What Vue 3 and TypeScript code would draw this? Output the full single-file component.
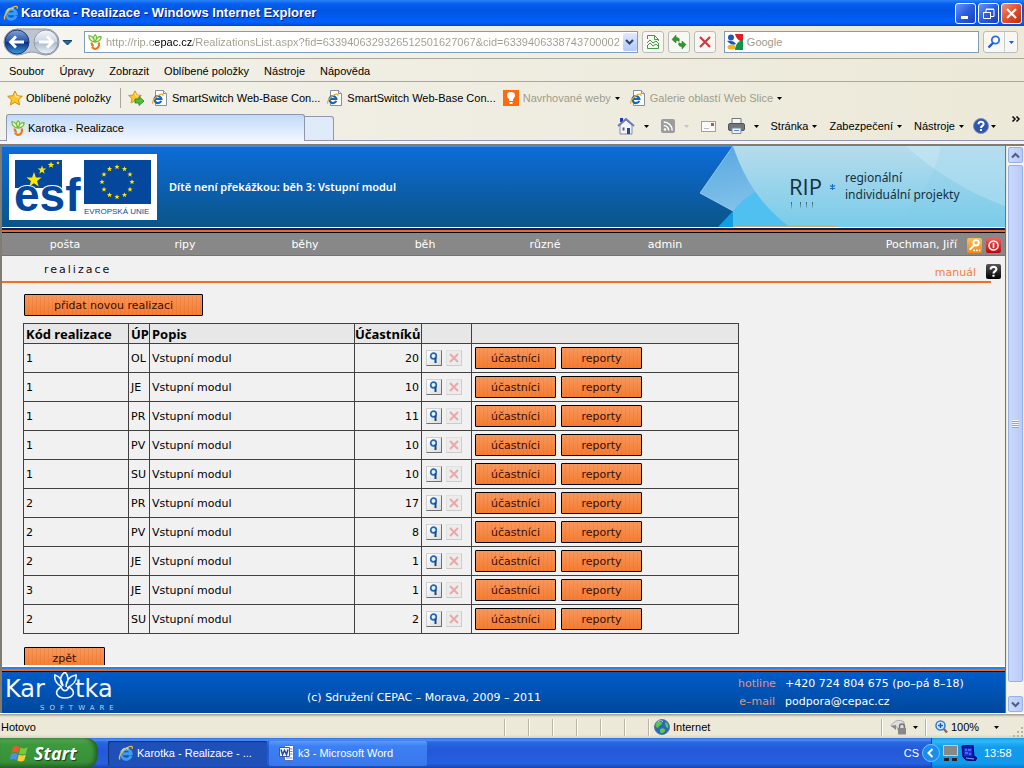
<script setup lang="ts">
import { ref } from 'vue'

interface Realization {
  code: number
  office: string
  description: string
  participants: number
}

const url = ref('http://rip.cepac.cz/RealizationsList.aspx?fid=6339406329326512501627067&cid=6339406338743700002')
const query = ref('')
const menus: string[] = ['Soubor', 'Úpravy', 'Zobrazit', 'Oblíbené položky', 'Nástroje', 'Nápověda']
const sections: string[] = ['pošta', 'ripy', 'běhy', 'běh', 'různé', 'admin']
const commands: string[] = ['Stránka', 'Zabezpečení', 'Nástroje']

const desc = 'Vstupní modul'
const rows: Realization[] = [
  { code: 1, office: 'OL', description: desc, participants: 20 },
  { code: 1, office: 'JE', description: desc, participants: 10 },
  { code: 1, office: 'PR', description: desc, participants: 11 },
  { code: 1, office: 'PV', description: desc, participants: 10 },
  { code: 1, office: 'SU', description: desc, participants: 10 },
  { code: 2, office: 'PR', description: desc, participants: 17 },
  { code: 2, office: 'PV', description: desc, participants: 8 },
  { code: 2, office: 'JE', description: desc, participants: 1 },
  { code: 3, office: 'JE', description: desc, participants: 1 },
  { code: 2, office: 'SU', description: desc, participants: 2 },
]

const starPoints = (cx: number, cy: number, r: number): string =>
  Array.from({ length: 10 }, (_, i) => {
    const a = (i * Math.PI) / 5 - Math.PI / 2
    const d = i % 2 === 0 ? r : r * 0.4
    return `${(cx + d * Math.cos(a)).toFixed(2)},${(cy + d * Math.sin(a)).toFixed(2)}`
  }).join(' ')

const flagStars: string[] = Array.from({ length: 12 }, (_, i) => {
  const a = (i * Math.PI) / 6
  return starPoints(108 + 15 * Math.cos(a), 28 + 15 * Math.sin(a), 2.8)
})
</script>

<template>
  <div class="screen">
    <svg class="defs" width="0" height="0" aria-hidden="true">
      <symbol id="ie" viewBox="0 0 16 16">
        <path d="M13 10.800A5 5 0 1 1 13.200 8.800H5" fill="none" stroke="#3c9cf0" stroke-width="3" />
        <path d="M3.600 6.600A4.800 4.800 0 0 1 10.500 4" fill="none" stroke="#b8e4ff" stroke-width="1.200" />
        <path d="M2.200 14.400C-.2 13 3 6.500 8.500 3c4-2.500 6.600-2 5.600.7" fill="none" stroke="#f4bc28" stroke-width="1.300" />
      </symbol>
      <symbol id="iepage" viewBox="0 0 16 16">
        <path d="M3.500.5h8l3 3v12h-11z" fill="#fff" stroke="#8a8f98" />
        <path d="M11.500.5v3h3" fill="#e4e8ee" stroke="#8a8f98" />
        <path d="M9.200 10.800A3.500 3.500 0 1 1 9.400 9H3.500" fill="none" stroke="#1667c4" stroke-width="2.200" />
        <path d="M1 13.600C-.5 12 3 7 7 5c3-1.500 4.500-1 3.800 1" fill="none" stroke="#f0a81c" stroke-width="1.200" />
      </symbol>
      <symbol id="carrot" viewBox="0 0 14 16">
        <path d="M6.500 8C2 7 .8 4 1 1.600 4 2 6 4 6.500 8zM7 7.500C4.500 4 6 1.500 7.200.7 9 2 9 5 7 7.500zM7.500 8C8 4 10.500 2.500 13 2.600 13.200 5.500 11 7.500 7.500 8z" fill="#f0ffdc" stroke="#74c034" stroke-width="1.300" />
        <path d="M3.800 8.500c-.5 2 .5 3 2 3.500M10.500 8.500c1.500 3-.5 6-3 6.300-1.500.2-3-.8-3.200-2" fill="none" stroke="#f07818" stroke-width="2.200" />
      </symbol>
      <symbol id="star" viewBox="0 0 16 16">
        <path d="M8 1l2.200 4.700 5.100.6-3.800 3.500 1.100 5.100L8 12.300l-4.600 2.600 1.100-5.100L.7 6.300l5.100-.6z" fill="#ffc52c" stroke="#d08c18" />
        <path d="M8 3.500l1.300 3.200 3.200.4" fill="none" stroke="#fff0a0" />
      </symbol>
      <symbol id="down" viewBox="0 0 5 3"><path d="M0 0h5L2.500 3z" fill="currentColor" /></symbol>
    </svg>

    <header class="titlebar">
      <svg width="16" height="16"><use href="#ie" /></svg>
      <h1>Karotka - Realizace - Windows Internet Explorer</h1>
      <div class="winbtns">
        <button aria-label="Minimalizovat"><svg viewBox="0 0 19 19"><path d="M5 13.500h7" stroke="#fff" stroke-width="3" /></svg></button>
        <button aria-label="Obnovit"><svg viewBox="0 0 19 19" fill="none" stroke="#fff"><path d="M7 8V5.500h8v7h-3M7 5h8M4 8.500h7.500v6H4.500V8M4 8.500h8" /></svg></button>
        <button class="close" aria-label="Zavřít"><svg viewBox="0 0 19 19"><path d="M5 5l9 9M14 5l-9 9" stroke="#fff" stroke-width="2.200" /></svg></button>
      </div>
    </header>

    <div class="navrow">
      <svg class="travel" width="72" height="32" viewBox="0 0 72 32">
        <defs>
          <linearGradient id="gb" x2="0" y2="1"><stop stop-color="#86a3d8" /><stop offset=".48" stop-color="#2552a8" /><stop offset=".52" stop-color="#0c2f80" /><stop offset="1" stop-color="#3b9be8" /></linearGradient>
          <linearGradient id="gf" x2="0" y2="1"><stop stop-color="#f4f7fb" /><stop offset=".48" stop-color="#ccd5e2" /><stop offset=".52" stop-color="#aab8cc" /><stop offset="1" stop-color="#edf4fb" /></linearGradient>
        </defs>
        <path d="M17 3h29a13 13 0 0 1 0 26c-6 0-8-3-14-3s-9 3-15 3a13 13 0 0 1 0-26z" fill="#bfc5ce" stroke="#8f98a6" />
        <circle cx="17" cy="16" r="12" fill="url(#gb)" stroke="#1c3870" />
        <circle cx="46" cy="16" r="12" fill="url(#gf)" stroke="#8e9aac" />
        <path d="M24 16H11M16 10.500L10.500 16l5.500 5.500" fill="none" stroke="#fff" stroke-width="2.800" />
        <path d="M39 16h13M47 10.500l5.500 5.500-5.500 5.500" fill="none" stroke="#fff" stroke-width="2.800" />
        <path d="M63 14.500h9l-4.500 4.500z" fill="#1b6cae" stroke="#16406e" />
      </svg>
      <div class="address">
        <svg width="14" height="16"><use href="#carrot" /></svg>
        <input v-model="url" aria-label="Adresa" />
        <button class="drop" aria-label="Historie adres"><svg width="9" height="7" viewBox="0 0 9 7"><path d="M1 1l3.500 3.500L8 1" fill="none" stroke="#31466f" stroke-width="2.200" /></svg></button>
      </div>
      <button class="tool" aria-label="Kompatibilní zobrazení"><svg width="14" height="16" viewBox="0 0 14 16"><path d="M1.500 5V1.500h7l4 4V7M8.500 1.500v4h4M1.500 11v3.500h11V10" fill="none" stroke="#3f9a48" /><path d="M1 9l3-3 3 3 3-2 3 3M1 12l3-3 3 3 3-2 3 3" fill="none" stroke="#3f9a48" /></svg></button>
      <button class="tool" aria-label="Aktualizovat"><svg width="16" height="16" viewBox="0 0 16 16"><path d="M1 5.500L5 1v2.500c3 0 4 1.500 3 4C7.500 6.500 6.500 6.500 5 6.500V9zM15 10.500L11 15v-2.500c-3 0-4-1.500-3-4 .5 1 1.500 1 3 1V7z" fill="#2c9a30" stroke="#1b7220" stroke-width=".5" /></svg></button>
      <button class="tool" aria-label="Zastavit"><svg width="14" height="14" viewBox="0 0 14 14"><path d="M2 2l10 10M12 2L2 12" stroke="#cc3b40" stroke-width="2.200" /></svg></button>
      <div class="search">
        <svg width="16" height="16" viewBox="0 0 16 16"><rect width="16" height="16" rx="1" fill="#fff" /><path d="M8 0h8v7C12 8 9 4 8 0z" fill="#e02020" /><path d="M16 6v10H8c0-5 3-9 8-10z" fill="#129448" /><circle cx="4" cy="3.500" r="3" fill="#2454c0" /><path d="M0 7c3-1 8 0 9 3-3 2-6 0-9-3z" fill="#2454c0" /><ellipse cx="4.500" cy="13" rx="4" ry="2.600" fill="#f2b41c" /></svg>
        <input v-model="query" placeholder="Google" aria-label="Hledat" />
      </div>
      <div class="go">
        <button aria-label="Vyhledat"><svg width="14" height="14" viewBox="0 0 14 14"><circle cx="8.500" cy="5" r="3.700" fill="#fff" stroke="#2f6fe0" stroke-width="1.800" /><path d="M6 8l-4.500 4.500" stroke="#2356c8" stroke-width="2.400" /></svg></button>
        <button class="blue" aria-label="Možnosti hledání"><svg width="5" height="3"><use href="#down" /></svg></button>
      </div>
    </div>

    <nav class="menurow"><button v-for="m in menus" :key="m">{{ m }}</button></nav>

    <nav class="favbar">
      <button class="favs"><svg width="16" height="16"><use href="#star" /></svg>Oblíbené položky</button>
      <button class="addfav" aria-label="Přidat na panel"><svg width="17" height="16" viewBox="0 0 17 16"><use href="#star" width="14" height="14" /><path d="M7 9h4V6.500l5 4.500-5 4.500V13H7z" fill="#4cc03c" stroke="#1f8020" stroke-width=".8" /></svg></button>
      <a href="#"><svg width="16" height="16"><use href="#iepage" /></svg>SmartSwitch Web-Base Con...</a>
      <a href="#"><svg width="16" height="16"><use href="#iepage" /></svg>SmartSwitch Web-Base Con...</a>
      <button class="dim"><svg width="16" height="16" viewBox="0 0 16 16"><path fill="#ff6a0c" d="M0 0h16v16H0z" /><path d="M8 2c5 0 5 5 2 7v2H6V9C3 7 3 2 8 2zM6.500 12h3v2h-3z" fill="#fff" /></svg>Navrhované weby<svg class="dd" width="5" height="3"><use href="#down" /></svg></button>
      <button class="dim"><svg width="16" height="16"><use href="#iepage" /></svg>Galerie oblastí Web Slice<svg class="dd" width="5" height="3"><use href="#down" /></svg></button>
    </nav>

    <div class="tabrow">
      <button class="tab"><svg width="14" height="16"><use href="#carrot" /></svg>Karotka - Realizace</button>
      <button class="newtab" aria-label="Nová karta"></button>
      <div class="cmds">
        <button class="ic" aria-label="Domů"><svg width="18" height="18" viewBox="0 0 18 18"><path d="M3 8v9h12V8L9 3z" fill="#f4f4fa" stroke="#8a8aa0" /><path d="M3 1h3v4H3z" fill="#2838a8" /><path d="M1 9l8-7 8 7" fill="none" stroke="#6a7ab8" stroke-width="1.800" /><path d="M10 11h3v6h-3z" fill="#284890" /><path d="M5.500 10.500h2v3h-2z" fill="#586070" /></svg><svg class="dd" width="5" height="3"><use href="#down" /></svg></button>
        <button class="ic faint" aria-label="Kanály"><svg width="14" height="14" viewBox="0 0 14 14"><rect width="14" height="14" rx="2" fill="#9c9c9c" /><circle cx="4" cy="10.500" r="1.300" fill="#fff" /><path d="M2.700 6.500a5 5 0 0 1 5 5M2.700 3a8.500 8.500 0 0 1 8.500 8.500" fill="none" stroke="#fff" stroke-width="1.500" /></svg><svg class="dd" width="5" height="3"><use href="#down" /></svg></button>
        <button class="ic" aria-label="Pošta"><svg width="15" height="11" viewBox="0 0 15 11"><rect x=".5" y=".5" width="14" height="10" fill="#fbfbfb" stroke="#a0a0a0" /><path d="M10 2h3v3h-3z" fill="#d84848" /><path d="M3 7.500h5" stroke="#bbb" /></svg></button>
        <button class="ic" aria-label="Tisk"><svg width="17" height="16" viewBox="0 0 17 16"><path d="M4 .5h9V6H4z" fill="#f5f5f5" stroke="#777" /><rect x=".5" y="5.500" width="16" height="7" rx="1.500" fill="#72767c" stroke="#50545a" /><path d="M4 10h9v5.500H4z" fill="#eef2fa" stroke="#889" /><path d="M6 12.500h5" stroke="#4a90d8" /></svg><svg class="dd" width="5" height="3"><use href="#down" /></svg></button>
        <button v-for="c in commands" :key="c" class="cmd">{{ c }}<svg class="dd" width="5" height="3"><use href="#down" /></svg></button>
        <button class="ic help" aria-label="Nápověda"><svg width="16" height="16" viewBox="0 0 16 16"><circle cx="8" cy="8" r="7.500" fill="#2c56b0" stroke="#8090b0" /><path d="M5.500 6.200C5.500 3 10.600 3 10.600 6c0 2-2.600 1.800-2.600 4M8 11v2" fill="none" stroke="#fff" stroke-width="2" /></svg><svg class="dd" width="5" height="3"><use href="#down" /></svg></button>
        <button class="more" aria-label="Další příkazy"><svg width="8" height="6" viewBox="0 0 8 6"><path d="M.5.5L3 3 .5 5.500M4.500.5L7 3 4.500 5.500" fill="none" stroke="#000" stroke-width="1.500" /></svg></button>
      </div>
    </div>
    <div class="edge"></div>

    <div class="viewport">
      <div class="page">
        <div class="banner">
          <svg class="logo" width="148" height="66" viewBox="0 0 148 66" role="img" aria-label="ESF, Evropská unie">
            <path fill="#fff" d="M0 0h148v66H0z" />
            <path fill="#05479c" d="M6 6h47v28H6z" />
            <text x="5" y="57" class="esf">esf</text>
            <path fill="#05479c" d="M75 6h67v44H75z" />
            <g fill="#ffe800">
              <polygon :points="starPoints(25, 26, 8)" /><polygon :points="starPoints(33, 16, 4.500)" />
              <polygon :points="starPoints(42, 11, 3.500)" /><polygon :points="starPoints(49, 9, 2)" />
              <polygon v-for="(p, i) in flagStars" :key="i" :points="p" />
            </g>
            <text x="75" y="60" class="eu">EVROPSKÁ UNIE</text>
          </svg>
          <strong>Dítě není překážkou: běh 3: Vstupní modul</strong>
          <svg class="rip" width="305" height="81" viewBox="0 0 305 81">
            <defs>
              <linearGradient id="sky" x2="0" y2="1"><stop stop-color="#b6dcec" /><stop offset="1" stop-color="#78cbea" /></linearGradient>
              <linearGradient id="left" x2=".6" y2="1"><stop stop-color="#58a8e0" /><stop offset="1" stop-color="#98d0f0" /></linearGradient>
              <linearGradient id="fade" x2="0" y2="1"><stop stop-color="#38606e" /><stop offset="1" stop-color="#80c4dc" /></linearGradient>
            </defs>
            <path d="M18 81l15-16 12 16z" fill="#149ce0" />
            <path d="M33 0L0 47l33 18v16h272V0z" fill="url(#left)" />
            <path d="M33 65q10-13 24-20l35 36H33z" fill="#50c0f0" />
            <path d="M33 0c10 30 27 60 57 81h215V0z" fill="url(#sky)" />
            <path d="M206 0h99v60C265 45 235 26 206 0z" fill="#d4eef8" opacity=".4" />
            <path d="M241 0c-5 25-22 60-50 81h114V0z" fill="#80ccea" opacity=".2" />
            <path d="M33 0L0 47l33 18" fill="none" stroke="#b0dcf4" opacity=".7" />
            <path d="M33 80.500h105" stroke="#c4ae78" />
            <text x="89" y="49" class="big">RIP</text>
            <path d="M91 56h1v7h-1zM100 56h1v6h-1zM106 56h1v6h-1zM112 56h1v6h-1z" fill="url(#fade)" />
            <path d="M132.500 38v6M130 39.500l5 3M135 39.500l-5 3" stroke="#1873c0" stroke-width="1.200" />
            <text x="145" y="36" class="sub">regionální</text>
            <text x="145" y="53" class="sub">individuální projekty</text>
          </svg>
        </div>
        <div class="stripes"></div>
        <nav class="sections">
          <a v-for="s in sections" :key="s" href="#">{{ s }}</a>
          <span class="user">Pochman, Jiří</span>
          <button class="sq key" aria-label="Změnit heslo"><svg viewBox="0 0 14 14"><circle cx="8.500" cy="4.500" r="2.500" fill="none" stroke="#fff" stroke-width="1.800" /><path d="M7 6.500L2.500 11" stroke="#fff" stroke-width="1.800" /><path d="M6 11.500h1.500M8.500 11.500H10M11 11.500h1.500" stroke="#fff" stroke-width="1.500" /></svg></button>
          <button class="sq off" aria-label="Odhlásit"><svg viewBox="0 0 14 14"><circle cx="7" cy="7" r="4.200" fill="none" stroke="#fff" stroke-width="1.400" /><path d="M7 4.500v5" stroke="#fff" stroke-width="1.500" /></svg></button>
        </nav>
        <div class="crumbs">
          <h2>realizace</h2>
          <a href="#">manuál</a>
          <button class="sq q" aria-label="Nápověda k aplikaci"><svg viewBox="0 0 14 14"><path d="M4.300 5.200C4.300 1.800 9.700 1.800 9.700 5c0 2-2.700 1.600-2.700 3.800M7 10v2" fill="none" stroke="#fff" stroke-width="2" /></svg></button>
        </div>
        <main>
          <button class="orange wide">přidat novou realizaci</button>
          <table>
            <colgroup><col class="c1" /><col class="c2" /><col class="c3" /><col class="c4" /><col class="c5" /><col class="c6" /></colgroup>
            <thead><tr><th>Kód realizace</th><th>ÚP</th><th>Popis</th><th class="num">Účastníků</th><th></th><th></th></tr></thead>
            <tbody>
              <tr v-for="(r, i) in rows" :key="i">
                <td>{{ r.code }}</td><td>{{ r.office }}</td><td>{{ r.description }}</td><td class="num">{{ r.participants }}</td>
                <td class="tools"><div class="acts">
                  <button class="mini" aria-label="Zobrazit"><svg viewBox="0 0 14 14"><circle cx="6.500" cy="5" r="2.800" fill="#e8f4ff" stroke="#2468b4" stroke-width="1.700" /><path d="M8.500 6.500V12" stroke="#164880" stroke-width="2" /></svg></button>
                  <button class="mini dis" disabled aria-label="Smazat"><svg viewBox="0 0 14 14"><path d="M3 3l8 8M11 3l-8 8" stroke="#eaa8a8" stroke-width="2" /></svg></button>
                </div></td>
                <td class="tools"><div class="btns"><button class="orange">účastníci</button><button class="orange">reporty</button></div></td>
              </tr>
            </tbody>
          </table>
          <button class="orange">zpět</button>
        </main>
        <footer>
          <svg width="116" height="41" viewBox="0 0 116 41" role="img" aria-label="Karotka Software">
            <text x="0" y="25" class="kar">Kar</text><text x="70" y="25" class="kar">tka</text>
            <path d="M57 15C51 12 49 7 50 3c4 1 7 5 8 11M57 13c-3-6-1-10 3-13 3 3 4 8 1 13M61 15c0-7 4-11 10-12 1 5-3 10-9 13M56 15c-8 5-4 11 4 11s12-6 4-11M56 15c2 5 6 5 8 0" fill="none" stroke="#f0f6ff" stroke-width="1.600" />
            <text x="35" y="38" class="soft">SOFTWARE</text>
          </svg>
          <span class="copy">(c) Sdružení CEPAC – Morava, 2009 – 2011</span>
          <dl><dt>hotline</dt><dd>+420 724 804 675 (po–pá 8–18)</dd><dt>e–mail</dt><dd>podpora@cepac.cz</dd></dl>
        </footer>
      </div>
      <div class="scroll">
        <button aria-label="Nahoru"><svg width="9" height="7" viewBox="0 0 9 7"><path d="M1 5.500L4.500 2 8 5.500" fill="none" stroke="#4d6185" stroke-width="2.200" /></svg></button>
        <div class="thumb"><i></i><i></i><i></i><i></i></div>
        <button aria-label="Dolů"><svg width="9" height="7" viewBox="0 0 9 7"><path d="M1 1.500L4.500 5 8 1.500" fill="none" stroke="#4d6185" stroke-width="2.200" /></svg></button>
      </div>
    </div>

    <div class="status">
      <span class="done">Hotovo</span>
      <i v-for="n in 6" :key="n" class="cell"></i>
      <span class="zone"><svg width="16" height="16" viewBox="0 0 16 16"><circle cx="8" cy="8" r="7.500" fill="#2c68b8" stroke="#5878a0" /><path d="M3 3c3-2 5-1 5 1S5 6 4 9C1 8 1 5 3 3zM6 10c3-2 6 0 5 2s-4 3-5 1zM11 3c3 1 4 4 3 6-2 0-3-3-3-6z" fill="#58c850" /><path d="M4 2.500c2-1 3-1 5 0" stroke="#d8f0ff" /></svg>Internet</span>
      <span class="lock"><svg width="18" height="16" viewBox="0 0 18 16"><path d="M1 7c3-6 9-7 13-4v8H8L7 8z" fill="#ddd" stroke="#aaa" /><path d="M1 7l5 4V6z" fill="#888" /><path d="M9.500 9V7.500a2.500 2.500 0 0 1 5 0V9" fill="none" stroke="#777" stroke-width="1.500" /><path d="M8 9h8v6.500H8z" fill="#888" /></svg><svg width="5" height="3"><use href="#down" /></svg></span>
      <span class="zoom"><svg width="13" height="14" viewBox="0 0 13 14"><path d="M8 8l4 4.500" stroke="#8a6a50" stroke-width="2.500" /><circle cx="5.500" cy="5.500" r="4.500" fill="#d4ecff" stroke="#3880d0" stroke-width="1.600" /><path d="M3 5.500h5M5.500 3v5" stroke="#1860c0" stroke-width="1.500" /></svg>100%<svg class="last" width="5" height="3"><use href="#down" /></svg></span>
      <svg class="grip" width="12" height="12" viewBox="0 0 12 12" fill="#b8b4a0"><path d="M9 1h2v2H9zM5 5h2v2H5zM9 5h2v2H9zM1 9h2v2H1zM5 9h2v2H5zM9 9h2v2H9z" /></svg>
    </div>

    <div class="taskbar">
      <button class="start"><svg width="20" height="18" viewBox="0 0 20 18"><path d="M3 3c2-1.500 4-1.500 6.500 0L8 9C6 7.500 4 7.500 1.500 9z" fill="#f0582a" /><path d="M10.500 3.500c2.500 1.300 4.500 1.300 7-.2L16 9.500c-2.500 1.300-4.500 1.300-7 0z" fill="#7cc83c" /><path d="M1.200 10c2.500-1.500 4.500-1.500 6.500 0l-1.500 6c-2-1.500-4-1.500-6.500 0z" fill="#4a90f0" /><path d="M8.800 10.500c2.500 1.300 4.500 1.300 7 0l-1.500 6c-2.500 1.300-4.500 1.300-7 0z" fill="#fccc30" /></svg>Start</button>
      <button class="task on"><svg width="16" height="16"><use href="#ie" /></svg>Karotka - Realizace - ...</button>
      <button class="task"><svg width="16" height="16" viewBox="0 0 16 16"><path d="M5.500.5h9v15h-9z" fill="#fff" stroke="#5870a8" /><path d="M11 4h2.500M11 6.500h2.500M11 9h2.500M7 13h6.500" stroke="#6888c8" /><path d="M.5 2.500h10v9H.5z" fill="#f0f4ff" stroke="#3858a8" /><path d="M2 4.500l1.500 5 2-4 2 4 1.500-5" fill="none" stroke="#2848a0" stroke-width="1.500" /></svg>k3 - Microsoft Word</button>
      <span class="lang">CS</span>
      <div class="tray">
        <button aria-label="Zobrazit skryté ikony"><svg width="18" height="18" viewBox="0 0 18 18"><circle cx="9" cy="9" r="8.500" fill="#1c8cec" stroke="#70c4fc" /><path d="M10.500 5L6.500 9l4 4" fill="none" stroke="#fff" stroke-width="2" /></svg></button>
        <svg width="15" height="16" viewBox="0 0 15 16"><path d="M.5.5h14v10H.5z" fill="#888" stroke="#ccc" /><path d="M1 13h5v3H1zM9 13h5v3H9z" fill="#222" /><path d="M2 12h3M10 12h3" stroke="#888" /></svg>
        <svg width="16" height="16" viewBox="0 0 16 16"><path d="M1 1l11-1 1 11 3 2-2 3-9-1-3-3z" fill="#0818a0" stroke="#000860" /><path d="M3 3h8v8H3z" fill="#1830d8" /><path d="M4 5h2M7 5h3M4 8h3M8 9h2M5 13l8 1" stroke="#88a0ff" /></svg>
        <time>13:58</time>
      </div>
    </div>
  </div>
</template>

<style>
body { margin: 0; }
</style>

<style scoped>
* { box-sizing: border-box; }
.screen { display: flex; flex-direction: column; height: 100vh; overflow: hidden; font: 11px/16px "Liberation Sans", sans-serif; color: #000; background: #ece9d8; }
.defs { position: absolute; }
svg { flex: none; display: block; }
button { font: inherit; color: inherit; background: none; border: 0; padding: 0; margin: 0; display: flex; align-items: center; white-space: nowrap; flex: none; }
a { color: inherit; text-decoration: none; }
input { font: inherit; border: 0; outline: 0; padding: 0; min-width: 0; flex: 1; background: none; }

.titlebar { flex: none; height: 26px; display: flex; align-items: center; padding: 0 2px 0 3px; gap: 2px; background: linear-gradient(#2a83f8, #0560ee 15%, #0054e3 40%, #0061fc 85%, #0048d0); }
.titlebar h1 { flex: 1; margin: 0; font: bold 13px/18px "Liberation Sans", sans-serif; color: #fff; text-shadow: 1px 1px #0a1883; }
.winbtns { display: flex; gap: 2px; }
.winbtns button { width: 21px; height: 21px; border: 1px solid #fff; border-radius: 3px; background: linear-gradient(135deg, #6c94f4, #2a5ce0 50%, #1840c0); }
.winbtns svg { width: 19px; height: 19px; }
.winbtns .close { background: linear-gradient(135deg, #f09078, #e0502c 50%, #b83010); }

.navrow { flex: none; height: 33px; display: flex; align-items: center; padding: 0 6px 0 0; border-bottom: 1px solid #aca899; background: linear-gradient(90deg, #f6f5f1, #ece9d8); }
.address, .search { display: flex; align-items: center; height: 22px; border: 1px solid #7f9db9; background: #fff; }
.address { margin-left: 12px; padding-left: 3px; gap: 4px; flex: 555 1 0; }
.address input { height: 18px; color: transparent; background: linear-gradient(90deg, #a09c8c 47px, #000 47px 87px, #a09c8c 87px); background-clip: text; -webkit-background-clip: text; }
.drop { width: 14px; height: 18px; margin-left: -4px; justify-content: center; background: linear-gradient(#dfe8ff, #b3c9fa); border-radius: 2px; }
.tool { width: 22px; height: 22px; margin-left: 4px; justify-content: center; border: 1px solid #b8bcc4; border-radius: 3px; background: #f8f7f2; }
.search { flex: 254 1 0; margin: 0 4px 0 8px; padding-left: 2px; gap: 4px; }
.search input::placeholder { color: #a09c8c; opacity: 1; }
.go { display: flex; height: 22px; border: 1px solid #b8bcc4; border-radius: 3px; background: #f8f7f2; }
.go button { width: 20px; justify-content: center; }
.go .blue { width: 13px; color: #0a60e0; border-left: 1px solid #c8ccd4; }

.menurow { flex: none; height: 23px; display: flex; align-items: center; gap: 15px; padding: 1px 0 0 9px; border-bottom: 1px solid #aca899; background: linear-gradient(90deg, #f2f1ea, #ece9d8); }
.favbar { flex: none; height: 32px; display: flex; align-items: center; padding-left: 7px; gap: 7px; background: linear-gradient(90deg, #f2f1ea, #ece9d8); }
.favbar button, .favbar a { display: flex; align-items: center; gap: 4px; white-space: nowrap; }
.favbar .favs { height: 20px; gap: 3px; padding-right: 9px; border-right: 1px solid #aca899; }
.favbar .dim { color: #a09c8c; margin-right: 3px; }
.dd { color: #000; }
.tabrow { flex: none; height: 27px; display: flex; align-items: flex-end; padding-left: 6px; background: linear-gradient(90deg, #f2f1ea, #ece9d8); border-bottom: 1px solid #9196ac; }
.tab { width: 299px; height: 27px; padding-left: 4px; gap: 3px; border: 1px solid #9196ac; border-bottom: 0; border-radius: 3px 3px 0 0; background: linear-gradient(#c0dafa, #f2f7fe); margin-bottom: -1px; }
.newtab { width: 29px; height: 24px; border: 1px solid #9196ac; border-bottom: 0; border-left: 0; border-radius: 0 3px 0 0; background: #e0ebfa; }
.cmds { flex: 1; display: flex; align-items: center; justify-content: flex-end; gap: 12px; height: 24px; padding: 0 4px 2px 0; align-self: center; }
.cmds button { height: 18px; gap: 9px; }
.cmds .cmd { gap: 4px; }
.cmds .help { gap: 2px; margin-left: -3px; }
.faint .dd { color: #c8c4b8; }
.cmds .more { height: 6px; margin: 0 0 14px 4px; }
.edge { flex: none; height: 5px; background: #f2f3fb; border-bottom: 2px solid #807c70; }

.viewport { flex: 1; min-height: 0; display: flex; border-left: 2px solid #807c70; background: #fff; }
.page { flex: 1; min-width: 0; display: flex; flex-direction: column; background: #f1f1f1; color: #000; font: 11px/16px "DejaVu Sans", sans-serif; border-right: 1px solid #a86820; }
.banner { flex: none; height: 81px; display: flex; align-items: center; padding-left: 7px; gap: 12px; color: #fff; background: linear-gradient(#0c6cd8, #0a5488); border-top: 1px solid #3c8cf0; }
.banner strong { flex: 1; font: 600 11px/16px "Noto Sans", sans-serif; }
.rip { margin-top: -1px; }
.esf { font: bold 46px "Liberation Sans", sans-serif; fill: #05479c; stroke: #fff; stroke-width: 2px; paint-order: stroke; }
.eu { font: 8px "Liberation Sans", sans-serif; fill: #0c4ca0; }
.big { font: 22px "Open Sans", sans-serif; fill: #16303c; }
.sub { font: 12px "Noto Sans", sans-serif; fill: #16303c; }
.stripes { flex: none; height: 6px; background: linear-gradient(#fff 1px, #06205c 1px 3px, #f06820 3px 5px, #000 5px); }
.sections { flex: none; height: 23px; display: flex; align-items: center; padding: 2px 0 0 3px; background: #888; border-bottom: 1px solid #a86820; color: #fff; }
.sections a { width: 120px; text-align: center; }
.user { margin-left: auto; margin-right: 10px; }
.sq { width: 15px; height: 15px; border-radius: 2px; }
.sq svg { width: 15px; height: 15px; }
.key { background: linear-gradient(#f8c060, #f08810); margin-right: 4px; }
.off { background: linear-gradient(#f06060, #b80808); margin-right: 4px; }
.crumbs { flex: none; height: 27px; display: flex; align-items: center; padding: 0 4px 0 42px; background: linear-gradient(#f26f1e, #f26f1e) 0 100% / calc(100% - 14px) 2px no-repeat; }
.crumbs h2 { flex: 1; margin: 0; font: 11px/16px "DejaVu Sans", sans-serif; letter-spacing: 2px; color: #180818; }
.crumbs a { color: #f08040; margin-right: 10px; margin-top: 6px; }
.q { background: linear-gradient(#555, #000); margin-top: 4px; }

main { flex: 1; min-height: 0; overflow: hidden; padding: 11px 0 0 21px; border-bottom: 1px solid #fff; }
.orange { justify-content: center; width: 81px; height: 22px; padding-top: 1px; border: 1px solid #000; border-radius: 1px; color: #3a0c04; background: repeating-linear-gradient(90deg, transparent 0 3px, rgba(190, 80, 20, .12) 3px 4px), linear-gradient(#f8975c, #f47c30); }
main > .orange { margin-left: 1px; }
.orange.wide { width: 179px; }
table { width: 716px; margin: 7px 0 13px; table-layout: fixed; border-collapse: collapse; }
th, td { border: 1px solid #404040; padding: 2px 2px 0; text-align: left; font-weight: normal; height: 29px; }
th { height: 20px; padding: 0 2px 0 3px; background: #e7e7e7; font: bold 13px/16px "Noto Sans", sans-serif; white-space: nowrap; }
th:nth-child(1) { padding-left: 2px; }
th:nth-child(2), th:nth-child(3) { padding-left: 2px; padding-right: 0; }
.tools { padding-top: 0; }
.num { text-align: right; padding-right: 2px; }
th.num { padding-left: 0; padding-right: 1px; }
.c1 { width: 105px; } .c2 { width: 21px; } .c3 { width: 205px; } .c4 { width: 67px; } .c5 { width: 50px; }
.acts, .btns { display: flex; align-items: center; }
.acts { gap: 4px; padding-left: 2px; }
.btns { gap: 5px; padding-left: 1px; }
.mini { width: 16px; height: 16px; border: 1px solid; border-color: #d0d0d0 #707070 #707070 #d0d0d0; background: linear-gradient(135deg, #fff, #dcdcdc); }
.mini svg { width: 14px; height: 14px; }
.dis { border-color: #e0e0e0 #ccc #ccc #e0e0e0; background: #ececec; }

footer { flex: none; height: 47px; display: flex; align-items: center; padding: 6px 0 0 3px; color: #fff; font: 11px/18px "DejaVu Sans", sans-serif; background: linear-gradient(#fff 1px, #2484ec 1px 3px, #f06820 3px 5px, #000 5px 6px, #005cc8 6px, #00489c); }
.copy { flex: 1; margin: 10px 0 0 186px; }
dl { display: grid; grid-template-columns: 37px 1fr; column-gap: 10px; width: 267px; margin: 0; }
dt { color: #e89080; text-align: right; white-space: nowrap; }
dd { margin: 0; white-space: nowrap; }
.kar { font: 24px "DejaVu Sans", sans-serif; fill: #f0f6ff; }
.soft { font: 7px "DejaVu Sans", sans-serif; letter-spacing: 5px; fill: #b8d0f8; }

.scroll { flex: none; width: 18px; display: flex; flex-direction: column; align-items: center; gap: 2px; padding: 1px 0; border-left: 1px solid #ece9d8; background: #f4f3ee; }
.scroll button, .thumb { width: 15px; border: 1px solid #98b0e8; border-radius: 2px; background: linear-gradient(90deg, #cbd9fd, #b8cbf8); }
.scroll button { height: 16px; justify-content: center; }
.thumb { flex: 1; display: flex; flex-direction: column; align-items: center; justify-content: center; gap: 1px; margin-bottom: 12px; }
.thumb i { width: 7px; height: 1px; background: #eef4fe; box-shadow: 0 1px #8ca8e4; }

.status { flex: none; height: 25px; display: flex; align-items: center; padding-top: 2px; border-top: 1px solid #fff; background: linear-gradient(#aaa698 1px, #dedac8 2px, #ece9d8 4px, #ece9d8 85%, #d8d4c0); }
.done { flex: 1; padding-left: 1px; }
.cell { width: 24px; height: 17px; border-left: 1px solid #b8b4a4; box-shadow: inset 1px 0 #fff; }
.status span { display: flex; align-items: center; }
.zone, .lock, .zoom { height: 17px; border-left: 1px solid #b8b4a4; box-shadow: inset 1px 0 #fff; }
.zone { width: 233px; gap: 3px; padding-left: 5px; }
.lock { width: 44px; gap: 5px; padding-left: 8px; }
.zoom { width: 87px; gap: 3px; padding-left: 9px; }
.last { margin-left: 12px; }
.grip { align-self: flex-end; }

.taskbar { flex: none; height: 30px; display: flex; align-items: center; color: #fff; background: linear-gradient(#3070e8, #4a90f8 2px, #2868e0 4px, #2458d8 40%, #2460e0 85%, #1c44a8); }
.start { width: 98px; height: 30px; padding-left: 10px; gap: 4px; border-radius: 0 12px 12px 0; font: italic bold 18px/24px "Open Sans", sans-serif; text-shadow: 1px 1px 1px #184010; background: linear-gradient(#60b060, #3c9a3c 20%, #389038 80%, #286828); box-shadow: inset -3px 0 4px #245c24; margin-right: 10px; }
.task { width: 158px; height: 25px; margin-right: 2px; padding-left: 10px; gap: 3px; border-radius: 2px; background: linear-gradient(#5c9cfc, #3c80f4 20%, #3878ec); }
.task.on { width: 159px; background: #1e50b8; box-shadow: inset 1px 1px 1px #103078; }
.lang { margin-left: auto; margin-right: 12px; }
.tray { display: flex; align-items: center; gap: 3px; height: 30px; width: 93px; background: linear-gradient(#10a0f0, #30b8f8 3px, #129cec 30%, #1098ec 85%, #0c78c8); border-left: 1px solid #0c4cb0; }
.tray button { margin-left: -10px; }
.tray time { margin-left: 4px; }
</style>
